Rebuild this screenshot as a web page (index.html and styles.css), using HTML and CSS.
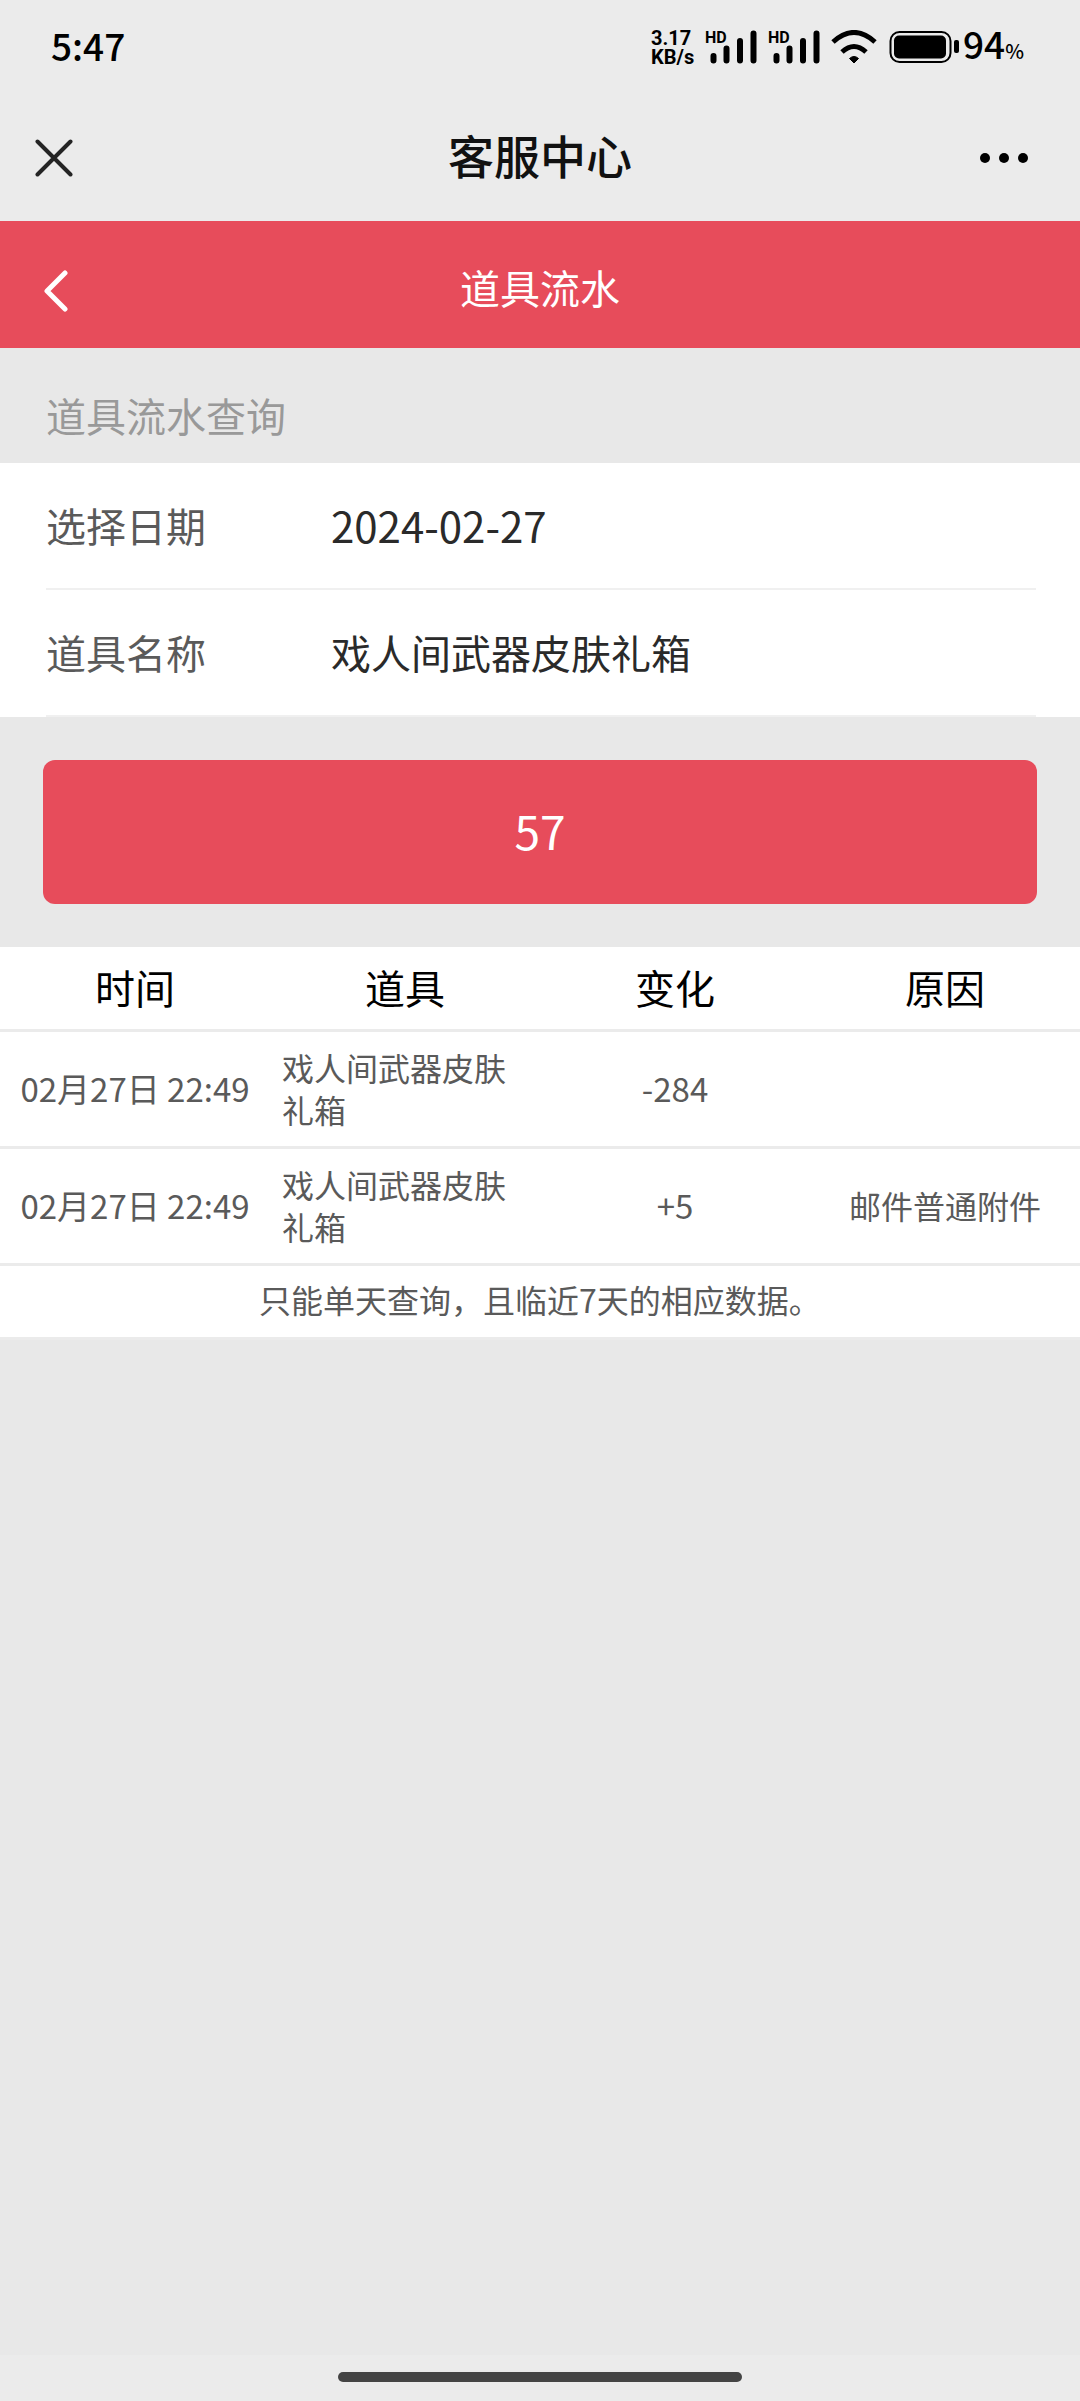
FILE: index.html
```html
<!DOCTYPE html>
<html lang="zh-CN">
<head>
<meta charset="utf-8">
<meta name="viewport" content="width=device-width, initial-scale=1">
<title>客服中心</title>
<link rel="stylesheet" href="styles.css">
</head>
<body>
<div class="status-bar">
  <span class="clock">5:47</span>
  <div class="indicators">
    <div class="net-speed"><span class="speed-value">3.17</span><span class="speed-unit">KB/s</span></div>
    <div class="signal">
      <span class="signal-tag">HD</span>
      <svg width="52" height="34" viewBox="0 0 52 34" aria-hidden="true"><path d="M8.500 26V30.500M21.500 18.500V30.500M35 11V30.500M48.500 3.500V30.500"/></svg>
    </div>
    <div class="signal">
      <span class="signal-tag">HD</span>
      <svg width="52" height="34" viewBox="0 0 52 34" aria-hidden="true"><path d="M8.500 26V30.500M21.500 18.500V30.500M35 11V30.500M48.500 3.500V30.500"/></svg>
    </div>
    <svg class="wifi" width="46" height="34" viewBox="0 0 46 34" aria-hidden="true"><path class="arc" d="M2 12Q23-7 44 12M11 22Q23 11 35 22"/><path d="M18.500 28.500Q23 24.500 27.500 28.500L23 33Z" stroke="#000" stroke-width="1" stroke-linejoin="round"/></svg>
    <svg class="battery" width="70" height="34" viewBox="0 0 70 34" aria-hidden="true"><rect x="1.500" y="2" width="60" height="30" rx="9" fill="none" stroke="#000" stroke-width="2"/><rect x="5" y="5.500" width="52" height="23" rx="5"/><rect x="65" y="10" width="5" height="13" rx="2"/></svg>
    <div class="charge"><span class="charge-value">94</span><span class="charge-unit">%</span></div>
  </div>
</div>

<header class="app-bar">
  <button class="icon-button" type="button" aria-label="关闭"><svg width="38" height="38" viewBox="0 0 38 38" aria-hidden="true"><path d="M2.500 2.500L35.500 35.500M35.500 2.500L2.500 35.500" fill="none" stroke="#242424" stroke-width="4" stroke-linecap="round"/></svg></button>
  <h1 class="app-title">客服中心</h1>
  <button class="icon-button icon-button-end" type="button" aria-label="更多"><svg width="50" height="12" viewBox="0 0 50 12" aria-hidden="true"><circle cx="6" cy="6" r="5"/><circle cx="25" cy="6" r="5"/><circle cx="44" cy="6" r="5"/></svg></button>
</header>

<nav class="page-bar">
  <a class="back" href="#" aria-label="返回"><svg width="26" height="42" viewBox="0 0 26 42" aria-hidden="true"><path d="M22 3L4 21L22 39" fill="none" stroke="#fff" stroke-width="5" stroke-linecap="round" stroke-linejoin="round"/></svg></a>
  <h2 class="page-title">道具流水</h2>
</nav>

<main class="content">
  <form>
    <h3 class="section-title">道具流水查询</h3>
    <div class="fields">
      <div class="field">
        <label class="field-label" for="date">选择日期</label>
        <input class="field-control field-date" id="date" type="text" value="2024-02-27" readonly>
      </div>
      <div class="field">
        <label class="field-label" for="item">道具名称</label>
        <select class="field-control" id="item"><option>戏人间武器皮肤礼箱</option></select>
      </div>
    </div>
    <div class="actions"><button class="submit" type="button">57</button></div>
  </form>

  <table class="records">
    <thead>
      <tr><th>时间</th><th>道具</th><th>变化</th><th>原因</th></tr>
    </thead>
    <tbody>
      <tr><td class="figure">02月27日 22:49</td><td class="item">戏人间武器皮肤礼箱</td><td class="figure">-284</td><td></td></tr>
      <tr><td class="figure">02月27日 22:49</td><td class="item">戏人间武器皮肤礼箱</td><td class="figure">+5</td><td>邮件普通附件</td></tr>
    </tbody>
    <tfoot>
      <tr><td colspan="4">只能单天查询，且临近7天的相应数据。</td></tr>
    </tfoot>
  </table>
</main>

<div class="home-area"><div class="home-indicator"></div></div>
</body>
</html>
```
FILE: styles.css
```css
* {
  box-sizing: border-box;
}

body {
  display: flex;
  flex-direction: column;
  min-height: 100vh;
  margin: 0;
  background: #e8e8e8;
  color: #000;
  font-family: "Noto Sans CJK SC", sans-serif;
}

h1, h2, h3 {
  margin: 0;
  font-weight: 400;
}

button, input, select {
  margin: 0;
  padding: 0;
  border: 0;
  background: none;
  color: inherit;
  font: inherit;
}

svg {
  display: block;
}

/* Status bar */
.status-bar {
  display: flex;
  align-items: center;
  justify-content: space-between;
  height: 94px;
  padding: 0 56px 0 51px;
  background: #ebebeb;
}

.clock {
  padding-bottom: 4px;
  font-size: 37px;
  font-weight: 500;
  line-height: 40px;
}

.indicators {
  display: flex;
  align-items: center;
}

.net-speed {
  display: flex;
  flex-direction: column;
  width: 54px;
  padding-top: 2px;
  font-family: Roboto, sans-serif;
  font-size: 20px;
  font-weight: 700;
  line-height: 19px;
}

.signal {
  position: relative;
  margin-right: 11px;
}

.signal path {
  fill: none;
  stroke: #000;
  stroke-width: 6;
  stroke-linecap: round;
}

.signal-tag {
  position: absolute;
  top: 0;
  left: 0;
  font-family: Roboto, sans-serif;
  font-size: 16px;
  font-weight: 700;
  line-height: 16px;
}

.wifi {
  margin-right: 12px;
}

.wifi .arc {
  fill: none;
  stroke: #000;
  stroke-width: 5;
}

.charge {
  display: flex;
  align-items: baseline;
  margin-left: 4px;
  font-weight: 500;
  line-height: 40px;
}

.charge-value {
  font-size: 37px;
}

.charge-unit {
  font-size: 20px;
}

/* Title bar of the host app */
.app-bar {
  display: grid;
  grid-template-columns: 1fr auto 1fr;
  align-items: center;
  height: 127px;
  padding: 0 35px;
  background: #ebebeb;
}

.icon-button {
  justify-self: start;
}

.icon-button-end {
  justify-self: end;
  padding-right: 16px;
}

.app-title {
  padding-bottom: 8px;
  font-size: 46px;
  font-weight: 500;
  line-height: 64px;
  color: #111;
}

/* Red page bar */
.page-bar {
  display: grid;
  grid-template-columns: 1fr auto 1fr;
  align-items: center;
  height: 127px;
  padding: 4px 43px 0;
  background: #e74c5b;
  color: #fff;
}

.back {
  justify-self: start;
  padding-top: 8px;
}

.page-title {
  font-size: 40px;
  line-height: 56px;
}

.content {
  flex: 1;
}

/* Query form */
.section-title {
  padding: 38px 46px 19px;
  font-size: 40px;
  line-height: 58px;
  color: #999;
}

.fields {
  padding: 0 44px 0 46px;
  background: #fff;
}

.field {
  display: flex;
  align-items: center;
  height: 127px;
  padding-bottom: 2px;
  border-bottom: 2px solid #f0f0f0;
}

.field-label {
  flex: none;
  width: 285px;
  font-size: 40px;
  line-height: 58px;
  color: #5a5a5a;
}

.field-control {
  flex: 1;
  min-width: 0;
  height: 58px;
  appearance: none;
  font-size: 40px;
  line-height: 58px;
  color: #2a2a2a;
}

.field-date {
  font-size: 42px;
}

.actions {
  padding: 43px;
}

.submit {
  display: block;
  width: 100%;
  height: 144px;
  padding-bottom: 4px;
  border-radius: 12px;
  background: #e74c5b;
  font-size: 46px;
  line-height: 64px;
  color: #fff;
}

/* Records */
.records {
  width: 100%;
  table-layout: fixed;
  border-spacing: 0;
  background: #fff;
  font-size: 32px;
  line-height: 42px;
  text-align: center;
  color: #5a5a5a;
}

.records th,
.records td {
  padding: 14px 12px 16px;
  border-bottom: 3px solid #ebebeb;
}

.records th {
  padding: 11px 12px 13px;
  font-size: 40px;
  font-weight: 400;
  line-height: 58px;
  color: #000;
}

.records .figure {
  padding-right: 0;
  padding-left: 0;
  font-size: 33px;
}

.records .item {
  text-align: left;
}

.records tfoot td {
  padding: 12px 12px 17px;
}

/* Gesture area */
.home-area {
  display: flex;
  justify-content: center;
  padding: 17px 0 19px;
  background: #ebebeb;
}

.home-indicator {
  width: 404px;
  height: 10px;
  border-radius: 5px;
  background: #444;
}
```
